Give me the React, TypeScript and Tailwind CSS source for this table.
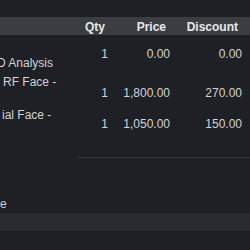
const rows = [
  { lines: [{ text: "", indent: "" }, { text: "D Analysis", indent: "-ml-[3px]" }], qty: "1", price: "0.00", discount: "0.00", h: "h-[37px]", descPad: "pt-[19px]", valPad: "pt-[10px]" },
  { lines: [{ text: "RF Face -", indent: "pl-[3px]" }], qty: "1", price: "1,800.00", discount: "270.00", h: "h-[33px]", descPad: "pt-[1px]", valPad: "pt-[12px]" },
  { lines: [{ text: "ial Face -", indent: "pl-[2px]" }], qty: "1", price: "1,050.00", discount: "150.00", h: "h-[36px]", descPad: "pt-[1px]", valPad: "pt-[10px]" },
];

export default function App() {
  return (
    <div className="w-[250px] h-[250px] overflow-hidden bg-[#1f2025] font-['Liberation_Sans',Arial,sans-serif] text-[12px] text-[#d2d3d5]">
      <div className="h-[17px]" />

      {/* Column headers */}
      <div className="h-[18px] pt-[2px] leading-[16px] bg-[#3a3e43] flex font-bold text-[#e8e8e8]">
        <div className="w-[78px]" />
        <div className="w-[34px] text-right pr-[7px]">Qty</div>
        <div className="w-[62px] text-right pr-[8px]">Price</div>
        <div className="w-[72px] text-right pr-[8px]">Discount</div>
      </div>

      {/* Line items */}
      {rows.map((r, i) => (
        <div key={i} className={`${r.h} flex leading-[18px]`}>
          <div className={`w-[78px] overflow-hidden whitespace-nowrap ${r.descPad}`}>
            {r.lines.map((l, j) =>
              l.text ? (
                <div key={j} className={l.indent}>
                  {l.text}
                </div>
              ) : null
            )}
          </div>
          <div className={`w-[34px] text-right pr-[4px] ${r.valPad}`}>{r.qty}</div>
          <div className={`w-[62px] text-right pr-[4px] ${r.valPad}`}>{r.price}</div>
          <div className={`w-[72px] text-right pr-[4px] ${r.valPad}`}>{r.discount}</div>
        </div>
      ))}

      <div className="h-[16px]" />
      <div className="h-px ml-[78px] bg-[#34363b]" />
      <div className="h-[37px]" />

      {/* Footer */}
      <div className="h-[18px] leading-[18px]">e</div>
      <div className="h-[18px] bg-[#2a2b30]" />
    </div>
  );
}
